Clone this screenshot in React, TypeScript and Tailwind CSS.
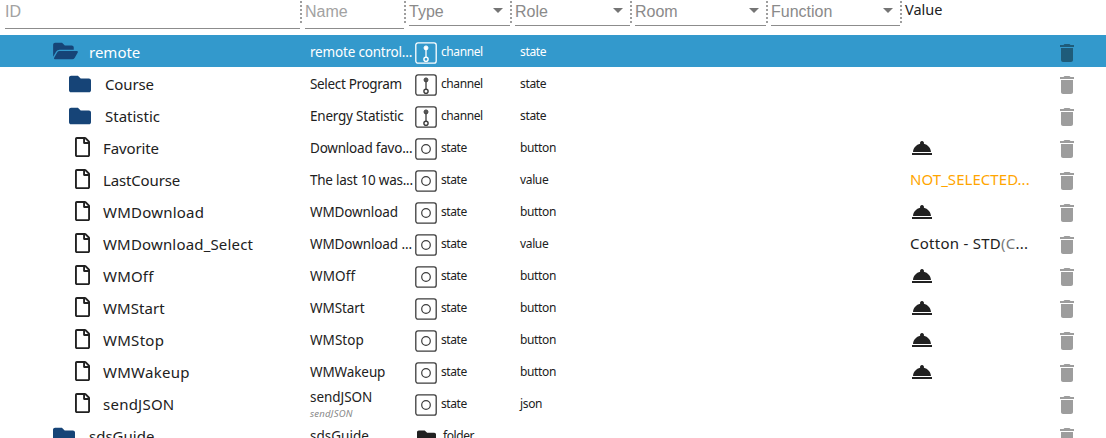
import React from 'react';
import { FaFolder, FaFolderOpen, FaRegFile } from 'react-icons/fa';
import { MdArrowDropDown, MdDelete, MdRoomService } from 'react-icons/md';

type Kind = 'channel' | 'state' | 'folder';

interface Row {
  id: string;
  idSpacing: string;
  name: string;
  nameSpacing: string;
  subtitle?: string;
  kind: Kind;
  role: string;
  level: 0 | 1;
  selected?: boolean;
  value?: 'button' | 'pending' | 'course';
}

const rows: Row[] = [
  { id: 'remote', idSpacing: '', name: 'remote control...', nameSpacing: 'tracking-[-0.19px]', kind: 'channel', role: 'state', level: 0, selected: true },
  { id: 'Course', idSpacing: 'tracking-[-0.12px]', name: 'Select Program', nameSpacing: 'tracking-[-0.33px]', kind: 'channel', role: 'state', level: 1 },
  { id: 'Statistic', idSpacing: '', name: 'Energy Statistic', nameSpacing: 'tracking-[-0.22px]', kind: 'channel', role: 'state', level: 1 },
  { id: 'Favorite', idSpacing: 'tracking-[-0.12px]', name: 'Download favo...', nameSpacing: 'tracking-[-0.22px]', kind: 'state', role: 'button', level: 1, value: 'button' },
  { id: 'LastCourse', idSpacing: 'tracking-[-0.15px]', name: 'The last 10 was...', nameSpacing: 'tracking-[-0.25px]', kind: 'state', role: 'value', level: 1, value: 'pending' },
  { id: 'WMDownload', idSpacing: 'tracking-[0.22px]', name: 'WMDownload', nameSpacing: 'tracking-[-0.12px]', kind: 'state', role: 'button', level: 1, value: 'button' },
  { id: 'WMDownload_Select', idSpacing: 'tracking-[0.17px]', name: 'WMDownload ...', nameSpacing: 'tracking-[-0.1px]', kind: 'state', role: 'value', level: 1, value: 'course' },
  { id: 'WMOff', idSpacing: 'tracking-[0.2px]', name: 'WMOff', nameSpacing: 'tracking-[0.1px]', kind: 'state', role: 'button', level: 1, value: 'button' },
  { id: 'WMStart', idSpacing: 'tracking-[0.08px]', name: 'WMStart', nameSpacing: 'tracking-[-0.08px]', kind: 'state', role: 'button', level: 1, value: 'button' },
  { id: 'WMStop', idSpacing: 'tracking-[0.28px]', name: 'WMStop', nameSpacing: 'tracking-[0.05px]', kind: 'state', role: 'button', level: 1, value: 'button' },
  { id: 'WMWakeup', idSpacing: 'tracking-[0.26px]', name: 'WMWakeup', nameSpacing: 'tracking-[-0.1px]', kind: 'state', role: 'button', level: 1, value: 'button' },
  { id: 'sendJSON', idSpacing: 'tracking-[0.24px]', name: 'sendJSON', nameSpacing: 'tracking-[-0.05px]', subtitle: 'sendJSON', kind: 'state', role: 'json', level: 1 },
  { id: 'sdsGuide', idSpacing: '', name: 'sdsGuide', nameSpacing: '', kind: 'folder', role: '', level: 0 },
];

function KindIcon({ kind, selected }: { kind: Kind; selected?: boolean }) {
  if (kind === 'folder') {
    return <FaFolder className="ml-[2px] mt-1 h-[19px] w-[19px] shrink-0" />;
  }
  return (
    <svg viewBox="0 0 22 22" className={'mt-[3px] h-[22px] w-[22px] shrink-0 ' + (selected ? 'text-white' : 'text-[#3c3c3c]')} fill="none" stroke="currentColor">
      <rect x="0.8" y="0.8" width="20.4" height="20.4" rx="2.2" strokeWidth="1.3" />
      {kind === 'state' ? (
        <circle cx="11" cy="11" r="4.3" strokeWidth="1.2" />
      ) : (
        <>
          <path d="M11 5.5V15.4" strokeWidth="1.3" />
          <circle cx="11" cy="5.9" r="2" fill={selected ? '#fff' : '#555'} strokeWidth="0.9" />
          <circle cx="11" cy="17.3" r="2.1" strokeWidth="1.4" fill={selected ? '#3399cc' : '#fff'} />
        </>
      )}
    </svg>
  );
}

function TreeIcon({ row }: { row: Row }) {
  if (row.selected) return <FaFolderOpen className="h-[22px] w-[25px] text-[#164477]" />;
  if (row.kind === 'state') return <FaRegFile className="ml-[6px] h-5 w-[15px]" />;
  return <FaFolder className="mt-px h-[22px] w-[22px] text-[#164477]" />;
}

function ValueCell({ value }: { value: Row['value'] }) {
  if (value === 'button') return <MdRoomService className="mt-[2px] h-6 w-6" />;
  if (value === 'pending') return <span className="mt-px tracking-[0.05px] text-[#ffa500]">NOT_SELECTED...</span>;
  if (value === 'course') {
    return (
      <span className="mt-px tracking-[0.26px]">
        Cotton - STD<span className="text-[#777]">(C</span>...
      </span>
    );
  }
  return null;
}

function ObjectRow({ row }: { row: Row }) {
  const label = row.selected ? 'pl-[11px]' : row.kind === 'state' ? 'pl-[13px]' : 'pl-[14px]';
  return (
    <div className={'flex h-8 shrink-0 ' + (row.selected ? 'bg-[#3399cc] text-white' : 'text-[#212121]')}>
      <div className={'flex w-[310px] shrink-0 items-center ' + (row.level === 0 ? 'pl-[53px]' : 'pl-[69px]')}>
        <TreeIcon row={row} />
        <span className={'mt-[2px] text-[15px] leading-5 ' + label + ' ' + row.idSpacing}>{row.id}</span>
      </div>
      <div className="flex w-[105px] shrink-0 flex-col whitespace-nowrap text-[13.5px]">
        <span className={(row.subtitle ? 'pt-px leading-[18px] ' : 'leading-[34px] ') + row.nameSpacing}>{row.name}</span>
        {row.subtitle && <span className="pt-[3px] text-[9.5px] italic leading-[10px] tracking-[0.25px] text-[#888]">{row.subtitle}</span>}
      </div>
      <div className="flex w-[105px] shrink-0 items-center">
        <KindIcon kind={row.kind} selected={row.selected} />
        <span className={'mt-[2px] text-[12px] leading-5 tracking-[-0.42px] ' + (row.kind === 'folder' ? 'pl-[7px]' : 'pl-1')}>{row.kind}</span>
      </div>
      <div className="w-[390px] shrink-0 text-[12px] leading-[34px] tracking-[-0.35px]">{row.role}</div>
      <div className="flex w-[145px] shrink-0 items-center whitespace-nowrap text-[15px]">
        <ValueCell value={row.value} />
      </div>
      <div className="flex items-center">
        <MdDelete className={'mt-1 h-6 w-6 ' + (row.selected ? 'text-[#1f5c7a]' : 'text-[#9d9d9d]')} />
      </div>
    </div>
  );
}

function Divider() {
  return <div className="mt-px h-[24px] w-[2px] shrink-0 bg-[repeating-linear-gradient(to_bottom,#9e9e9e_0px,#9e9e9e_2px,transparent_2px,transparent_4px)]" />;
}

function Filter({ label, width }: { label: string; width: string }) {
  return (
    <div className={'flex h-[26px] shrink-0 justify-between border-b border-[#8c8c8c] text-[#8a8a8a] ' + width}>
      <span className="leading-[23px]">{label}</span>
      <MdArrowDropDown className="-mt-[2px] h-6 w-6 text-[#757575]" />
    </div>
  );
}

export default function App() {
  return (
    <div className="flex h-[438px] w-[1106px] flex-col overflow-hidden bg-white font-['Noto_Sans','Open_Sans',sans-serif]">
      <header className="flex h-[35px] shrink-0 font-['Liberation_Sans',Arial,sans-serif] text-[16px]">
        <div className="ml-[5px] h-[29px] w-[295px] shrink-0 border-b border-[#8c8c8c] leading-[24px] text-[#a2a2a2]">ID</div>
        <Divider />
        <div className="ml-[3px] h-[29px] w-[99px] shrink-0 border-b border-[#8c8c8c] leading-[24px] text-[#a2a2a2]">Name</div>
        <Divider />
        <Filter label="Type" width="ml-[3px] w-[101px]" />
        <Divider />
        <Filter label="Role" width="ml-[3px] w-[115px]" />
        <Divider />
        <Filter label="Room" width="ml-[3px] w-[131px]" />
        <Divider />
        <Filter label="Function" width="ml-[3px] w-[129px]" />
        <Divider />
        <div className="ml-[3px] font-['Noto_Sans','Open_Sans',sans-serif] text-[14.5px] leading-[18px] text-[#212121]">Value</div>
      </header>
      <main className="flex flex-col">
        {rows.map((row) => (
          <ObjectRow key={row.id} row={row} />
        ))}
      </main>
    </div>
  );
}
